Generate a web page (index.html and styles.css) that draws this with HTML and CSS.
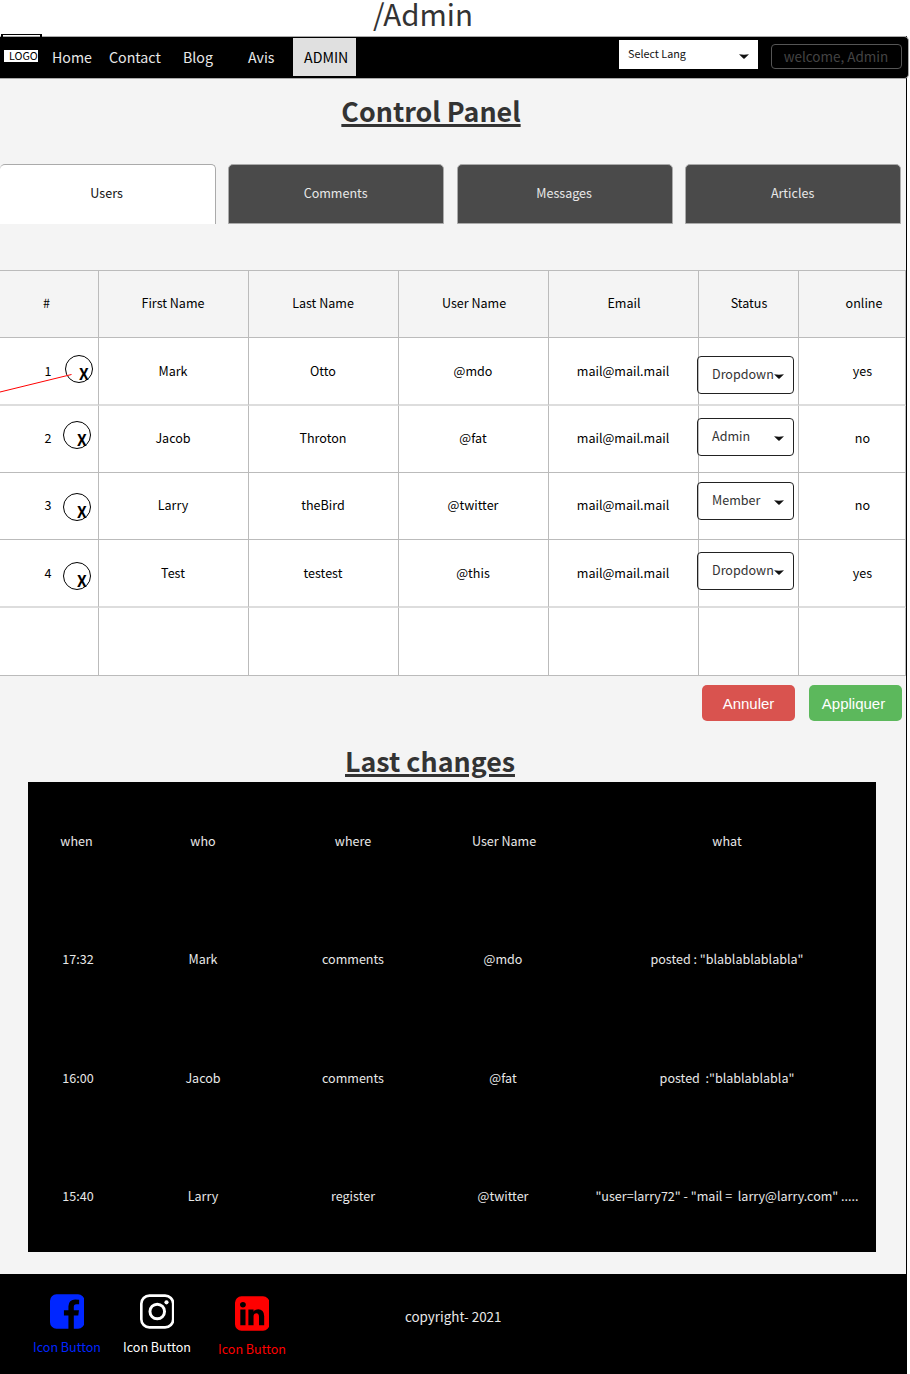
FILE: index.html
```html
<!DOCTYPE html>
<html lang="en">
<head>
<meta charset="utf-8">
<title>Admin</title>
<link rel="stylesheet" href="styles.css">
</head>
<body>
<div class="crumb">/Admin</div>
<main class="page">
  <nav class="nav">
    <span class="logo-tab"></span>
    <span class="logo">LOGO</span>
    <a class="home">Home</a><a class="contact">Contact</a><a class="blog">Blog</a><a class="avis">Avis</a><a class="active">ADMIN</a>
    <div class="lang">Select Lang<svg class="caret" viewBox="0 0 10 5"><path d="M0 0.3Q5 1 10 0.3L5.6 4.6Q5 5 4.4 4.6Z"/></svg></div>
    <div class="welcome">welcome, Admin</div>
  </nav>
  <h1 class="title">Control Panel</h1>
  <div class="tabs">
    <div class="tab tab-on">Users</div>
    <div class="tab">Comments</div>
    <div class="tab">Messages</div>
    <div class="tab">Articles</div>
  </div>
  <div class="users">
    <div class="row head"><span>#</span><span>First Name</span><span>Last Name</span><span>User Name</span><span>Email</span><span>Status</span><span>online</span></div>
    <div class="row soft"><span>1<b class="del d1">X</b></span><span>Mark</span><span>Otto</span><span>@mdo</span><span>mail@mail.mail</span><span><i class="drop s1">Dropdown<svg class="caret" viewBox="0 0 10 5"><path d="M0 0.3Q5 1 10 0.3L5.6 4.6Q5 5 4.4 4.6Z"/></svg></i></span><span>yes</span>
      <svg class="pointer" viewBox="0 0 72 20"><path d="M0 18L71.5 0.5"/></svg></div>
    <div class="row"><span>2<b class="del d2">X</b></span><span>Jacob</span><span>Throton</span><span>@fat</span><span>mail@mail.mail</span><span><i class="drop s2">Admin<svg class="caret" viewBox="0 0 10 5"><path d="M0 0.3Q5 1 10 0.3L5.6 4.6Q5 5 4.4 4.6Z"/></svg></i></span><span>no</span></div>
    <div class="row"><span>3<b class="del d3">X</b></span><span>Larry</span><span>theBird</span><span>@twitter</span><span>mail@mail.mail</span><span><i class="drop s3">Member<svg class="caret" viewBox="0 0 10 5"><path d="M0 0.3Q5 1 10 0.3L5.6 4.6Q5 5 4.4 4.6Z"/></svg></i></span><span>no</span></div>
    <div class="row soft"><span>4<b class="del d4">X</b></span><span>Test</span><span>testest</span><span>@this</span><span>mail@mail.mail</span><span><i class="drop s4">Dropdown<svg class="caret" viewBox="0 0 10 5"><path d="M0 0.3Q5 1 10 0.3L5.6 4.6Q5 5 4.4 4.6Z"/></svg></i></span><span>yes</span></div>
    <div class="row last"><span></span><span></span><span></span><span></span><span></span><span></span><span></span></div>
  </div>
  <div class="actions"><button class="btn cancel">Annuler</button><button class="btn apply">Appliquer</button></div>
  <h2 class="title sub">Last changes</h2>
  <div class="log">
    <span class="h0">when</span><span>who</span><span>where</span><span class="h3">User Name</span><span>what</span>
    <span>17:32</span><span>Mark</span><span>comments</span><span>@mdo</span><span>posted : "blablablablabla"</span>
    <span>16:00</span><span>Jacob</span><span>comments</span><span>@fat</span><span>posted &nbsp;:"blablablabla"</span>
    <span>15:40</span><span>Larry</span><span>register</span><span>@twitter</span><span>"user=larry72" - "mail = &nbsp;larry@larry.com" .....</span>
  </div>
  <footer class="footer">
    <div class="social fb"><svg viewBox="0 128 1536 1536"><path d="M1248 128q119 0 203.500 84.500t84.500 203.500v960q0 119-84.500 203.500t-203.500 84.500h-188v-595h199l30-232h-229v-148q0-56 23.500-84t91.500-28l122-1v-207q-63-9-178-9-136 0-217.500 80t-81.500 226v171h-200v232h200v595h-532q-119 0-203.500-84.500t-84.500-203.500v-960q0-119 84.500-203.500t203.500-84.500h960z"/></svg>Icon Button</div>
    <div class="social ig"><svg viewBox="0 0 34 34"><rect x="1.300" y="1.300" width="31.400" height="31.400" rx="8" fill="none" stroke="currentColor" stroke-width="2.600"/><circle cx="17" cy="17" r="7.200" fill="none" stroke="currentColor" stroke-width="2.900"/><circle cx="26.100" cy="8" r="2.050"/></svg>Icon Button</div>
    <div class="social li"><svg viewBox="0 128 1536 1536"><path d="M237 1414h231v-694h-231v694zm246-908q-1-52-36-86t-93-34-94.500 34-36.500 86q0 51 35.500 85.500t92.500 34.500h1q59 0 95-34.500t36-85.500zm585 908h231v-398q0-154-73-233t-193-79q-136 0-209 117h2v-101h-231q3 66 0 694h231v-388q0-38 7-56 15-35 45-59.500t74-24.500q116 0 116 157v371zm468-998v960q0 119-84.500 203.500t-203.500 84.500h-960q-119 0-203.500-84.500t-84.500-203.500v-960q0-119 84.500-203.500t203.500-84.500h960q119 0 203.500 84.500t84.500 203.500z"/></svg>Icon Button</div>
    <div class="copy">copyright- 2021</div>
  </footer>
</main>
</body>
</html>
```
FILE: styles.css
```css
* { box-sizing: border-box; }
body {
  margin: 0;
  width: 910px;
  height: 1374px;
  overflow: hidden;
  background: #fff;
  color: #000;
  font: 12.55px/20px "Noto Sans CJK SC", sans-serif;
}
.crumb {
  height: 36px;
  padding-left: 373px;
  font-size: 29.5px;
  line-height: 27px;
  color: #333;
}
.page {
  width: 907px;
  height: 1338px;
  border-right: 1px solid #000;
  background: #f4f4f4;
}
.nav {
  position: relative;
  display: flex;
  align-items: center;
  width: 909px;
  height: 43px;
  padding-left: 4px;
  background: #000;
  border: 1px solid #aaa;
  border-left: 0;
  border-radius: 0 5px 5px 0;
  color: #e8e8e8;
  font-size: 14.2px;
}
.nav a { margin-top: -2px; }
.logo-tab {
  position: absolute;
  left: 1px;
  top: -3px;
  width: 41px;
  height: 3px;
  border: 2px solid #000;
  border-width: 1px 2px 0;
}
.logo {
  width: 34px;
  height: 12px;
  margin-top: -4px;
  padding-left: 5px;
  background: #fff;
  color: #000;
  font-size: 10.7px;
  line-height: 11px;
}
.nav .home { width: 57px; margin-left: 14px; }
.contact { width: 74px; }
.blog { width: 65px; }
.avis { width: 45px; }
.active {
  width: 63px;
  height: 38px;
  padding-left: 11px;
  background: #e0e0e0;
  color: #000;
  line-height: 38px;
}
.lang {
  display: flex;
  justify-content: space-between;
  width: 139px;
  height: 29px;
  margin: -6px 13px 0 263px;
  padding: 0 9.5px 0 9px;
  background: #fff;
  color: #111;
  font-size: 10.8px;
  line-height: 27px;
}
.caret { width: 10px; height: 5px; fill: #111; }
.lang .caret { margin-top: 14px; }
.welcome {
  width: 131px;
  height: 25px;
  margin-top: -3px;
  padding-right: 1px;
  border: 1px solid #555;
  border-radius: 4px;
  color: #444;
  font-size: 13.5px;
  line-height: 23px;
  text-align: center;
}
.title {
  width: 862px;
  height: 44px;
  margin: 11px 0 0;
  color: #333;
  font-size: 26.8px;
  line-height: 41px;
  font-weight: bold;
  text-align: center;
  text-decoration: underline;
  text-decoration-thickness: 3px;
}
.tabs {
  display: grid;
  grid-template-columns: repeat(4, 216px);
  column-gap: 12.5px;
  margin: 30px 0 0 -0.4px;
}
.tab {
  height: 60px;
  padding-right: 1px;
  border: 1px solid #aaa;
  border-radius: 5px 5px 0 0;
  background: #4a4a4a;
  color: #e8e8e8;
  line-height: 56px;
  text-align: center;
}
.tab-on { background: #fff; color: #111; border-bottom: 0; border-left: 0; }
.users {
  margin-top: 46px;
  border-top: 1px solid #bbb;
  background: #fff;
}
.row {
  position: relative;
  display: grid;
  grid-template-columns: 99px 150px 150px 150px 150px 100px 107px;
  height: 67px;
}
.row > span {
  position: relative;
  padding-right: 1px;
  border-right: 1px solid #bbb;
  border-bottom: 1px solid #bbb;
  line-height: 64px;
  text-align: center;
}
.row > span:first-child { padding-right: 2px; }
.row > span:nth-child(7) { padding: 0 0 0 21px; }
.head { background: #f4f4f4; }
.row.head > span:first-child { padding-right: 5px; }
.head > span:nth-child(4), .head > span:nth-child(5) { padding-left: 2px; }
.head > span:nth-child(6) { padding-left: 2px; }
.row.head > span:nth-child(7) { padding-left: 24px; }
.soft, .last { height: 68px; }
.soft > span { border-bottom: 2px solid #ddd; line-height: 66px; }
.pointer {
  position: absolute;
  left: 0;
  top: 36px;
  width: 72px;
  height: 20px;
  fill: none;
  stroke: #f00;
}
.del {
  position: absolute;
  left: 63px;
  width: 28px;
  height: 28px;
  padding: 7px 0 0 9.5px;
  border: 1px solid #000;
  border-radius: 50%;
  font-size: 15.5px;
  line-height: 21px;
}
.d1 { left: 65px; top: 16.5px; }
.d2 { top: 14.5px; }
.d3 { top: 19.5px; }
.d4 { top: 21.5px; }
.drop {
  position: absolute;
  left: -2px;
  display: flex;
  justify-content: space-between;
  width: 97px;
  height: 38px;
  padding: 0 9.5px 0 14px;
  border: 1px solid #222;
  border-radius: 4px;
  color: #333;
  font-style: normal;
  line-height: 34px;
}
.drop .caret { flex: none; margin: 17px 0 0 -4px; }
.s1 { top: 18px; }
.s2 { top: 12px; }
.s3 { top: 9px; }
.s4 { top: 12px; }
.actions { display: flex; gap: 14px; margin: 9px 0 0 702px; }
.btn {
  width: 93px;
  height: 36px;
  padding: 1px 0 0;
  border: 0;
  border-radius: 5px;
  background: #d9534f;
  color: #fff;
  font: 15px "Liberation Sans", sans-serif;
}
.apply { background: #5cb85c; padding-right: 4px; }
.sub { height: 41px; margin-top: 20px; width: 860px; line-height: 39px; }
.log {
  display: grid;
  grid-template-columns: 100px 150px 150px 150px 298px;
  grid-auto-rows: 118.4px;
  width: 848px;
  height: 470px;
  margin-left: 28px;
  overflow: hidden;
  background: #000;
  color: #e8e8e8;
  line-height: 117px;
  text-align: center;
}
.h0 { padding-right: 3px; }
.h3 { padding-left: 2px; }
.footer {
  display: flex;
  height: 100px;
  margin-top: 22px;
  padding: 20px 0 0 32px;
  background: #000;
  color: #e8e8e8;
}
.social { width: 70px; text-align: center; white-space: nowrap; }
.social svg { display: block; width: 34.5px; height: 35px; margin: 0 auto 8px 17.7px; fill: currentColor; }
.fb { color: #0026ff; }
.ig { margin-left: 20px; color: #fff; }
.li { margin: 2px 0 0 25px; color: #f00; }
.copy { margin: 12px 0 0 118px; font-size: 13.4px; }
```
